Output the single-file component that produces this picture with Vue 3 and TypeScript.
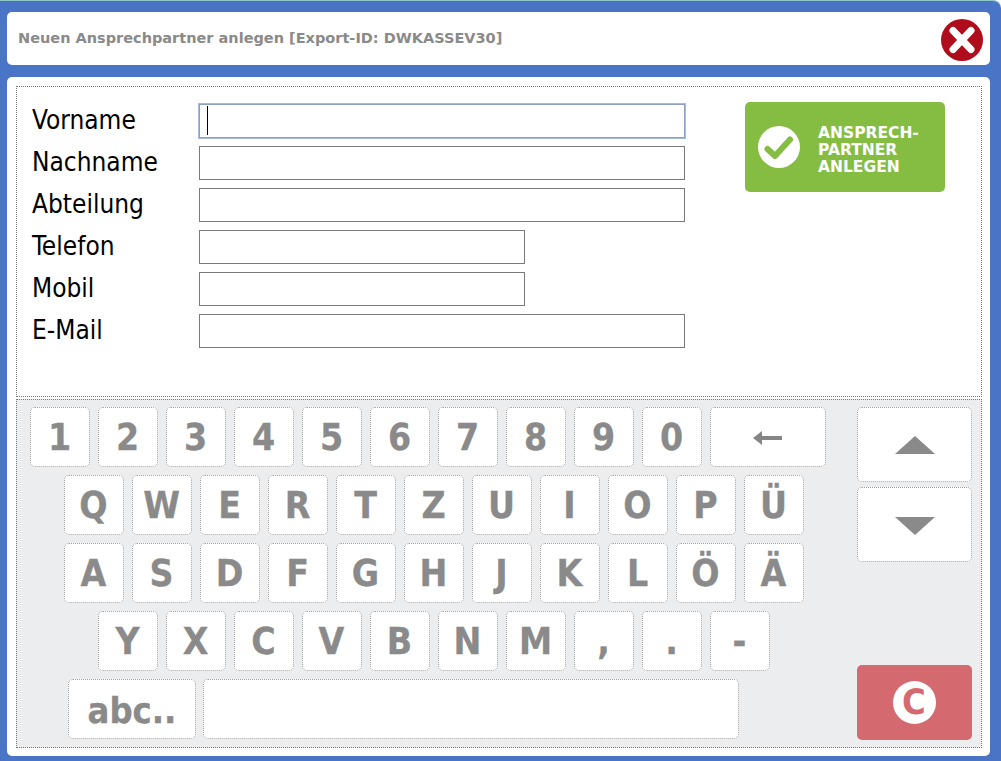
<script setup lang="ts">
const labels = [
  { text: 'Vorname', short: false, active: true },
  { text: 'Nachname', short: false, active: false },
  { text: 'Abteilung', short: false, active: false },
  { text: 'Telefon', short: true, active: false },
  { text: 'Mobil', short: true, active: false },
  { text: 'E-Mail', short: false, active: false },
];

const numberRow = ['1', '2', '3', '4', '5', '6', '7', '8', '9', '0'];
const letterRows = [
  { cls: 'row-q', keys: ['Q', 'W', 'E', 'R', 'T', 'Z', 'U', 'I', 'O', 'P', 'Ü'] },
  { cls: 'row-q', keys: ['A', 'S', 'D', 'F', 'G', 'H', 'J', 'K', 'L', 'Ö', 'Ä'] },
  { cls: 'row-y', keys: ['Y', 'X', 'C', 'V', 'B', 'N', 'M', ',', '.', '-'] },
];
</script>

<template>
  <div class="window">
    <header class="titlebar">
      <span class="title">Neuen Ansprechpartner anlegen [Export-ID: DWKASSEV30]</span>
      <button class="close" aria-label="Schließen">
        <svg viewBox="0 0 42 42" width="42" height="42">
          <circle cx="21" cy="21" r="21" fill="#b00d1c" />
          <path d="M12 11.5 L30 30.5 M30 11.5 L12 30.5" stroke="#fff" stroke-width="7" stroke-linecap="round" />
        </svg>
      </button>
    </header>

    <main class="panel">
      <section class="form-area">
        <div class="fields">
          <div v-for="f in labels" :key="f.text" class="field-row">
            <label class="label">{{ f.text }}</label>
            <div class="input" :class="{ short: f.short, active: f.active }">
              <span v-if="f.active" class="caret"></span>
            </div>
          </div>
        </div>
        <button class="save">
          <svg viewBox="0 0 42 42" width="42" height="42">
            <circle cx="21" cy="21" r="21" fill="#fff" />
            <path d="M9.5 23 L17 30 L32 13.5" fill="none" stroke="#84bd41" stroke-width="6" stroke-linecap="round" stroke-linejoin="round" />
          </svg>
          <span class="save-text">ANSPRECH-<br />PARTNER<br />ANLEGEN</span>
        </button>
      </section>

      <section class="keyboard">
        <div class="keys">
          <div class="key-row">
            <button v-for="k in numberRow" :key="k" class="key">{{ k }}</button>
            <button class="key backspace" aria-label="Zurück">
              <svg viewBox="0 0 30 16" width="30" height="16">
                <path d="M0 8 L9 1 V6 H29 V10 H9 V15 Z" fill="#858585" />
              </svg>
            </button>
          </div>
          <div v-for="row in letterRows" :key="row.keys[0]" class="key-row" :class="row.cls">
            <button v-for="k in row.keys" :key="k" class="key">{{ k }}</button>
          </div>
          <div class="key-row row-bottom">
            <button class="key abc">abc..</button>
            <button class="key space" aria-label="Leerzeichen"></button>
          </div>
        </div>

        <div class="side">
          <button class="key arrow" aria-label="Hoch">
            <svg viewBox="0 0 40 18" width="40" height="18"><path d="M20 0 L40 18 H0 Z" fill="#8a8a8a" /></svg>
          </button>
          <button class="key arrow arrow-down" aria-label="Runter">
            <svg viewBox="0 0 40 18" width="40" height="18"><path d="M0 0 H40 L20 18 Z" fill="#8a8a8a" /></svg>
          </button>
          <button class="clear" aria-label="Löschen">
            <span class="clear-icon">C</span>
          </button>
        </div>
      </section>
    </main>
  </div>
</template>

<style>
html,
body {
  margin: 0;
  background: #fff;
}
</style>

<style scoped>
.window {
  box-sizing: border-box;
  width: 1001px;
  height: 761px;
  padding: 12px 11px 5px 7px;
  border-top: 1px solid #8fc9c6;
  background: #4a74c6;
  border-radius: 0 8px 0 0;
  font-family: "DejaVu Sans", "Liberation Sans", sans-serif;
  display: flex;
  flex-direction: column;
  gap: 12px;
}

button {
  font-family: inherit;
  padding: 0;
  margin: 0;
}

.titlebar {
  flex: none;
  height: 53px;
  margin-top: -1px;
  display: flex;
  align-items: center;
  justify-content: space-between;
  padding: 0 7px 0 11px;
  background: #fff;
  border-radius: 5px;
}

.title {
  color: #8a8a8a;
  font-size: 14.5px;
  font-weight: 700;
  margin-top: -2px;
}

.close {
  display: flex;
  border: 0;
  background: none;
  margin-top: 2px;
}

.panel {
  flex: 1;
  box-sizing: border-box;
  padding: 9px 8px 8px 9px;
  background: #fff;
  border-radius: 5px;
  display: flex;
  flex-direction: column;
  gap: 2px;
}

.form-area {
  box-sizing: border-box;
  height: 311px;
  flex: none;
  border: 1px dotted #777;
  padding: 15px 0 0 15px;
  display: flex;
  align-items: flex-start;
}

.fields {
  display: flex;
  flex-direction: column;
  gap: 8px;
  padding-top: 2px;
}

.field-row {
  display: flex;
  align-items: center;
  height: 34px;
}

.label {
  width: 167px;
  color: #000;
  font-family: "DejaVu Sans Condensed", "DejaVu Sans", sans-serif;
  font-size: 26px;
  line-height: 30px;
  margin-top: -2px;
}

.input {
  box-sizing: border-box;
  width: 486px;
  height: 34px;
  border: 1px solid #7a7a7a;
  background: #fff;
  position: relative;
}

.input.short {
  width: 326px;
}

.input.active {
  border-color: #8c9fc6;
  box-shadow: 0 0 0 1px #a9bbdc;
}

.caret {
  position: absolute;
  left: 7px;
  top: 1px;
  width: 1px;
  height: 29px;
  background: #000;
}

.save {
  box-sizing: border-box;
  width: 200px;
  height: 90px;
  margin: 0 0 0 60px;
  display: flex;
  align-items: center;
  gap: 18px;
  padding-left: 13px;
  border: 0;
  border-radius: 5px;
  background: #84bd41;
  color: #fff;
  text-align: left;
}

.save-text {
  font-size: 15.5px;
  font-weight: 700;
  line-height: 17px;
  margin-top: 6px;
}

.keyboard {
  flex: 1;
  box-sizing: border-box;
  border: 1px dotted #777;
  background: #ecedef;
  padding: 7px 9px 7px 13px;
  display: flex;
  justify-content: space-between;
}

.keys {
  display: flex;
  flex-direction: column;
  gap: 8px;
}

.key-row {
  display: flex;
  gap: 8px;
}

.row-q {
  padding-left: 34px;
}

.row-y {
  padding-left: 68px;
}

.row-bottom {
  padding-left: 38px;
  gap: 7px;
}

.key {
  box-sizing: border-box;
  width: 60px;
  height: 60px;
  padding: 1px 1px 0 0;
  display: flex;
  align-items: center;
  justify-content: center;
  border: 1px dotted #a0a0a0;
  border-radius: 5px;
  background: #fff;
  color: #8a8a8a;
  font-family: "DejaVu Sans Condensed", "DejaVu Sans", sans-serif;
  font-size: 37px;
  font-weight: 700;
  -webkit-text-stroke: 0.3px #8a8a8a;
}

.backspace {
  width: 116px;
  padding: 2px 0 0;
}

.abc {
  width: 128px;
  font-size: 36px;
  padding: 3px 0 0;
}

.space {
  width: 536px;
}

.side {
  display: flex;
  flex-direction: column;
  gap: 5px;
  width: 115px;
}

.arrow {
  width: 115px;
  height: 75px;
  padding: 0;
}

.arrow-down {
  padding-top: 3px;
}

.clear {
  width: 115px;
  height: 75px;
  margin-top: auto;
  display: flex;
  align-items: center;
  justify-content: center;
  border: 0;
  border-radius: 5px;
  background: #d46a70;
}

.clear-icon {
  width: 43px;
  height: 43px;
  margin-right: 1px;
  border-radius: 50%;
  background: #fff;
  color: #d46a70;
  font-family: "DejaVu Sans Condensed", "DejaVu Sans", sans-serif;
  font-size: 36px;
  font-weight: 700;
  line-height: 42px;
  text-align: center;
}
</style>
